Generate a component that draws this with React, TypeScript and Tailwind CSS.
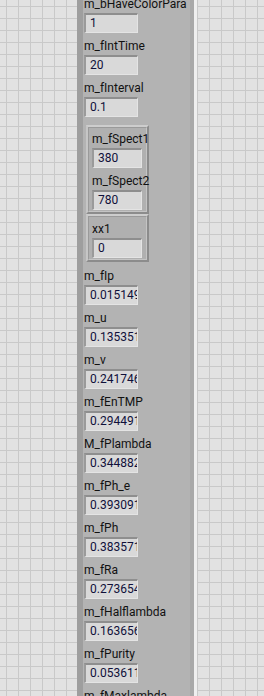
import React from "react";

type Item = { label: string; value: string };

const top: Item[] = [
  { label: "m_bHaveColorPara", value: "1" },
  { label: "m_fIntTime", value: "20" },
  { label: "m_fInterval", value: "0.1" },
];

const spect: Item[] = [
  { label: "m_fSpect1", value: "380" },
  { label: "m_fSpect2", value: "780" },
];

const rest: Item[] = [
  { label: "m_fIp", value: "0.015149" },
  { label: "m_u", value: "0.135351" },
  { label: "m_v", value: "0.241746" },
  { label: "m_fEnTMP", value: "0.294491" },
  { label: "M_fPlambda", value: "0.344882" },
  { label: "m_fPh_e", value: "0.393091" },
  { label: "m_fPh", value: "0.383571" },
  { label: "m_fRa", value: "0.273654" },
  { label: "m_fHalflambda", value: "0.163656" },
  { label: "m_fPurity", value: "0.053611" },
  { label: "m_fMaxlambda", value: "0.5" },
];

const Field = ({ label, value, w }: Item & { w: string }) => (
  <div className="mb-[4px] last:mb-0">
    <div className="h-[18px] leading-[18px] whitespace-nowrap text-[#111]">{label}</div>
    <div
      className={`${w} h-[20px] overflow-hidden whitespace-nowrap bg-[#d9d9d9] border-t-2 border-l-2 border-b border-r border-t-[#8e8e8e] border-l-[#9a9a9a] border-b-[#e4e4e4] border-r-[#e4e4e4] pl-[4px] leading-[17px] text-[#10103a]`}
    >
      {value}
    </div>
  </div>
);

const Cluster = ({ items, cls }: { items: Item[]; cls: string }) => (
  <div className={`w-[63px] ml-[2px] border-2 border-t-[#cdcdcd] border-l-[#c6c6c6] border-b-[#8c8c8c] border-r-[#8c8c8c] ${cls}`}>
    <div className="border border-t-[#9a9a9a] border-l-[#9a9a9a] border-b-[#c4c4c4] border-r-[#c4c4c4] bg-[#b0b0b0] pl-[3px] pb-[1px]">
      {items.map((it) => (
        <Field key={it.label} {...it} w="w-[50px]" />
      ))}
    </div>
  </div>
);

const grid =
  "bg-[#e2e2e2] bg-[linear-gradient(to_right,#c9c9c9_1px,transparent_1px),linear-gradient(to_bottom,#c9c9c9_1px,transparent_1px)] bg-[size:12px_12px]";

export default function App() {
  return (
    <div className="w-[264px] h-[696px] overflow-hidden flex font-['Roboto',sans-serif] text-[12px]">
      <div className={`w-[77px] shrink-0 ${grid} bg-[position:6px_6px]`} />
      <div className="w-[6px] shrink-0 bg-[#9e9e9e]" />
      <div className="w-[107px] shrink-0 bg-[#b3b3b3] pl-[1px] -mt-[5px] overflow-hidden">
        {top.map((it) => (
          <Field key={it.label} {...it} w="w-[54px]" />
        ))}
        <div className="h-[4px]" />
        <Cluster items={spect} cls="[&>div]:pt-[2px]" />
        <Cluster items={[{ label: "xx1", value: "0" }]} cls="mb-[5px] [&>div]:pt-[3px]" />
        {rest.map((it) => (
          <Field key={it.label} {...it} w="w-[54px]" />
        ))}
      </div>
      <div className="w-[4px] shrink-0 bg-[#a9a9a9]" />
      <div className="w-[3px] shrink-0 bg-[#efefef]" />
      <div className={`flex-1 ${grid} bg-[position:0px_6px]`} />
    </div>
  );
}
